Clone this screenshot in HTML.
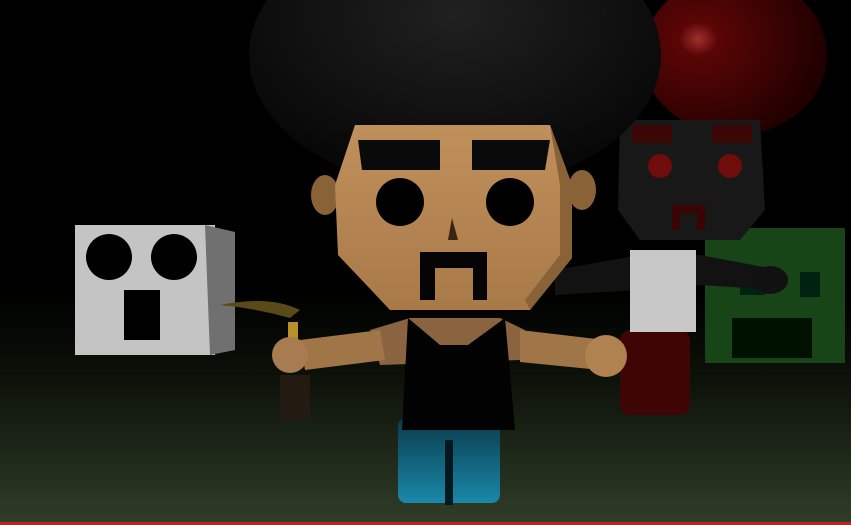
<!DOCTYPE html>
<html><head><style>html,body{margin:0;padding:0;background:#000;overflow:hidden}svg{display:block}</style></head>
<body>
<svg width="851" height="525" viewBox="0 0 851 525" xmlns="http://www.w3.org/2000/svg">
<defs>
<linearGradient id="gr" x1="0" y1="0" x2="0" y2="1">
<stop offset="0" stop-color="#000"/><stop offset="0.35" stop-color="#0b1008"/><stop offset="0.7" stop-color="#1e281a"/><stop offset="1" stop-color="#303f28"/></linearGradient>
<radialGradient id="afro" cx="0.5" cy="0.35" r="0.65"><stop offset="0" stop-color="#202020"/><stop offset="1" stop-color="#060606"/></radialGradient>
<radialGradient id="bal" cx="0.3" cy="0.4" r="0.7"><stop offset="0" stop-color="#a03030"/><stop offset="0.15" stop-color="#5a0505"/><stop offset="1" stop-color="#200000"/></radialGradient>
<linearGradient id="pants" x1="0" y1="0" x2="0" y2="1"><stop offset="0" stop-color="#0a3a4a"/><stop offset="1" stop-color="#1a88aa"/></linearGradient>
<linearGradient id="head" x1="0" y1="0" x2="0" y2="1"><stop offset="0" stop-color="#c0905c"/><stop offset="1" stop-color="#a87a48"/></linearGradient>
</defs>
<rect width="851" height="525" fill="#000"/>
<rect y="290" width="851" height="235" fill="url(#gr)"/>
<ellipse cx="735" cy="55" rx="92" ry="80" fill="url(#bal)"/>
<rect x="705" y="228" width="140" height="135" fill="#174517"/>
<rect x="740" y="270" width="25" height="25" fill="#021"/>
<rect x="800" y="272" width="20" height="25" fill="#021"/>
<rect x="732" y="318" width="80" height="40" fill="#010"/>
<rect x="620" y="330" width="70" height="85" rx="10" fill="#3e0505"/>
<path d="M555 270 L640 255 L700 255 L780 270 L780 290 L700 285 L640 290 L555 295Z" fill="#121212"/>
<ellipse cx="770" cy="280" rx="18" ry="14" fill="#111"/>
<rect x="630" y="250" width="66" height="82" fill="#c8c8c8"/>
<path d="M620 120 L760 120 L765 210 L740 240 L640 240 L618 210Z" fill="#181818"/>
<rect x="632" y="125" width="40" height="18" fill="#3a0606"/>
<rect x="712" y="125" width="40" height="18" fill="#3a0606"/>
<circle cx="660" cy="166" r="12" fill="#700c0c"/><circle cx="730" cy="166" r="12" fill="#700c0c"/>
<path d="M672 230 V205 H705 V230 H697 V213 H680 V230Z" fill="#3a0404"/>
<rect x="75" y="225" width="140" height="130" fill="#c4c4c4"/>
<path d="M205 225 L235 232 L235 350 L210 355Z" fill="#707070"/>
<circle cx="109" cy="257" r="23" fill="#000"/><circle cx="174" cy="257" r="23" fill="#000"/>
<rect x="124" y="290" width="36" height="50" fill="#000"/>
<path d="M220 305 Q270 295 300 310 L290 318 Q255 308 220 305Z" fill="#5a4a1a"/>
<rect x="288" y="322" width="10" height="25" fill="#b89028"/>
<rect x="280" y="375" width="30" height="45" fill="#231a12"/>
<ellipse cx="455" cy="55" rx="206" ry="135" fill="url(#afro)"/>
<ellipse cx="325" cy="195" rx="14" ry="20" fill="#8a6238"/>
<ellipse cx="582" cy="190" rx="14" ry="20" fill="#8a6238"/>
<path d="M370 330 L410 318 L500 318 L525 330 L520 360 L380 365Z" fill="#8a6440"/>
<path d="M300 340 L380 330 L385 360 L305 370Z" fill="#a07548"/>
<path d="M520 330 L605 340 L600 370 L520 362Z" fill="#a07548"/>
<circle cx="290" cy="355" r="18" fill="#a87c50"/>
<circle cx="606" cy="356" r="21" fill="#b08250"/>
<rect x="398" y="418" width="102" height="85" rx="8" fill="url(#pants)"/>
<rect x="445" y="440" width="8" height="65" fill="#041820"/>
<path d="M408 318 L440 345 L468 345 L505 318 L515 430 L402 430Z" fill="#020202"/>
<path d="M355 125 L550 125 L572 185 L572 258 L530 310 L390 310 L338 255 L335 185Z" fill="url(#head)"/>
<path d="M550 125 L572 185 L572 258 L530 310 L525 300 L560 255 L560 185Z" fill="#8a6238"/>
<path d="M358 140 L440 140 L440 170 L362 170Z" fill="#0a0a0a"/>
<path d="M472 140 L550 140 L545 170 L472 170Z" fill="#0a0a0a"/>
<circle cx="400" cy="202" r="24" fill="#000"/>
<circle cx="510" cy="202" r="24" fill="#000"/>
<path d="M452 218 L448 240 L458 240Z" fill="#3a2510"/>
<path d="M420 300 V252 H487 V300 H473 V268 H435 V300Z" fill="#050505"/>
<rect x="0" y="522" width="851" height="3" fill="#c02020"/>
</svg>
</body></html>
